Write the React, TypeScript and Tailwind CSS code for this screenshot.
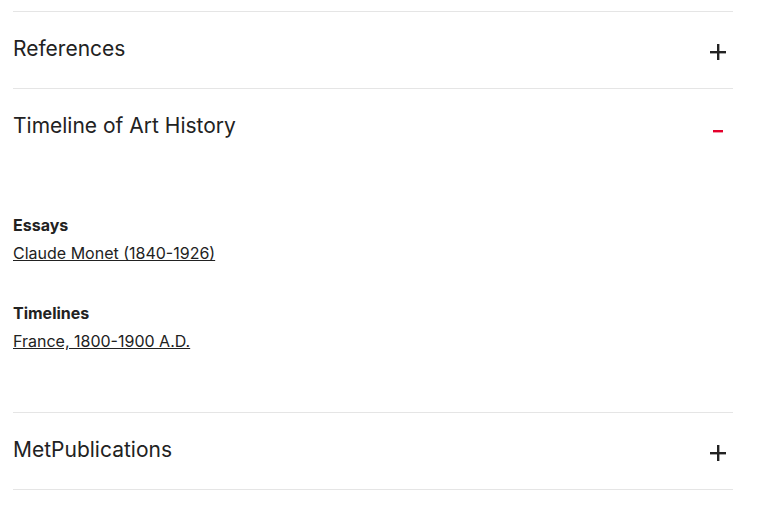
import React from "react";

function Plus() {
  return (
    <svg width="16" height="16" viewBox="0 0 16 16" className="block">
      <rect x="7" y="0" width="2.4" height="16" fill="#222" />
      <rect x="0" y="7" width="16" height="2.4" fill="#222" />
    </svg>
  );
}

function Minus() {
  return (
    <svg width="16" height="16" viewBox="0 0 16 16" className="block">
      <rect x="3" y="7" width="10" height="2.4" fill="#e4002b" />
    </svg>
  );
}

function Header({ title, open }: { title: string; open?: boolean }) {
  return (
    <div className="flex h-[76px] items-center justify-between">
      <h2 className="text-[21px] leading-none text-[#222] -mt-[4px]">{title}</h2>
      <div className={open ? "mr-[7px] mt-[8px]" : "mr-[7px] mt-[4px]"}>{open ? <Minus /> : <Plus />}</div>
    </div>
  );
}

export default function App() {
  return (
    <div className="min-h-[507px] bg-white" style={{ fontFamily: "Inter, 'Liberation Sans', sans-serif" }}>
      <div className="ml-[13px] w-[720px] pt-[11px]">
        <div className="border-t border-[#e5e5e5]">
          <div className="border-b border-[#e5e5e5]">
            <Header title="References" />
          </div>
          <div className="border-b border-[#e5e5e5]">
            <Header title="Timeline of Art History" open />
            <div className="pt-[46px] pb-[57px] text-[16px] text-[#222]">
              <div className="leading-[28px]">
                <div className="font-bold">Essays</div>
                <a href="#" className="underline">Claude Monet (1840-1926)</a>
              </div>
              <div className="mt-[32px] leading-[28px]">
                <div className="font-bold">Timelines</div>
                <a href="#" className="underline">France, 1800-1900 A.D.</a>
              </div>
            </div>
          </div>
          <div className="border-b border-[#e5e5e5]">
            <Header title="MetPublications" />
          </div>
        </div>
      </div>
    </div>
  );
}
